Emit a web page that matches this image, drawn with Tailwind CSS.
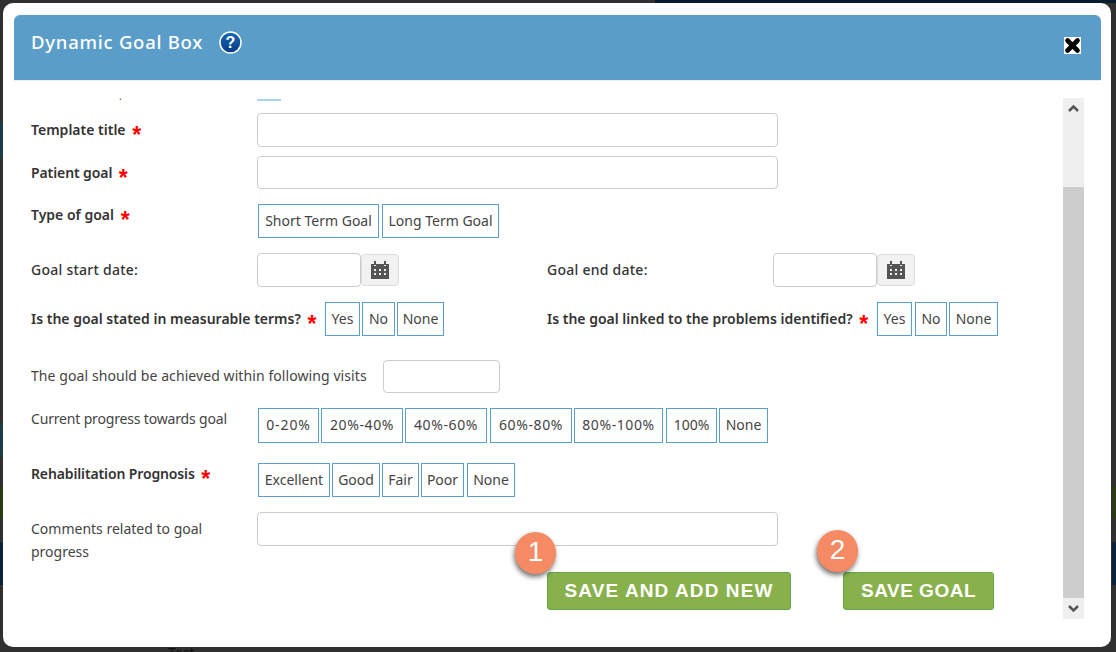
<!DOCTYPE html>
<html><head><meta charset="utf-8"><script src="https://cdn.jsdelivr.net/npm/@tailwindcss/browser@4"></script></head>
<body class="m-0 overflow-hidden">
<div class="relative w-[1116px] h-[652px] overflow-hidden bg-[#303030] pt-[3px] pl-[3px] font-['Noto_Sans','Liberation_Sans',sans-serif] text-[14px] text-[#444]">
<div class="absolute left-[655px] top-0 w-[461px] h-[3px] bg-[#0a1c2c]"></div>
<div class="absolute left-0 top-[122px] w-[3px] h-[36px] bg-[#1f3a48]"></div>
<div class="absolute left-0 top-[423px] w-[3px] h-[34px] bg-[#1f3a48]"></div>
<div class="absolute left-0 top-[486px] w-[3px] h-[32px] bg-[#2a3a16]"></div>
<div class="absolute left-0 top-[542px] w-[3px] h-[43px] bg-[#0b2238]"></div>
<div class="absolute left-[1112px] top-[486px] w-[4px] h-[32px] bg-[#2a3a16]"></div>
<div class="absolute left-[1112px] top-[542px] w-[4px] h-[43px] bg-[#0b2238]"></div>
<span class="absolute left-[168px] top-[642px] text-[14px] text-[#111]">Test</span>
<div class="relative w-[1108px] h-[644px] bg-white rounded-[10px] pt-[12px] pl-[11px] pr-[10px] flex flex-col">
  <div class="h-[65px] bg-[#5b9dc9] rounded-t-[6px] flex items-center pl-[17px] pr-[20px] shrink-0 border-b border-[#e8eef2] box-content -mb-px">
    <span class="text-white text-[18.5px] font-medium leading-none tracking-[0.75px] mb-[10px] whitespace-nowrap">Dynamic Goal Box</span>
    <svg class="ml-[16px] mb-[10px]" width="23" height="23" viewBox="0 0 23 23"><defs><linearGradient id="g" x1="0" y1="0" x2="0" y2="1"><stop offset="0" stop-color="#1a6ab4"/><stop offset="1" stop-color="#063a84"/></linearGradient></defs><circle cx="11.5" cy="11.5" r="10.5" fill="url(#g)" stroke="#fff" stroke-width="1.5"/><text x="11.5" y="17" text-anchor="middle" font-family="Liberation Sans" font-weight="700" font-size="16" fill="#fff">?</text></svg>
    <span class="ml-auto mb-[4px] w-[17px] h-[17px] bg-white flex items-center justify-center"><svg width="17" height="17" viewBox="0 0 17 17"><path d="M3.5 3.5 L13.5 13.5 M13.5 3.5 L3.5 13.5" stroke="#000" stroke-width="4.6" stroke-linecap="round"/></svg></span>
  </div>
  <div class="flex flex-1 min-h-0 pt-[18px]">
    <div class="w-[1049px] pl-[17px] flex flex-col">
      <div class="h-[3px] overflow-hidden flex shrink-0"><span class="w-[226px] pl-[88px] leading-none text-[10px] -mt-[7px]">.</span><span class="w-[24px] h-[2px] mt-[1px] bg-[#a9d3e8]"></span></div>
      <div class="flex items-center h-[34px] mt-[12px]"><label class="w-[226px] font-semibold text-[#333] -mt-[2px] whitespace-nowrap">Template title <span class="text-[#f00] ml-[3px] font-['Liberation_Sans'] font-bold text-[23px] leading-[0] align-[-8px]">*</span></label><div class="w-[521px] h-[34px] border border-[#ccc] rounded-[4px]"></div></div>
      <div class="flex items-center h-[33px] mt-[9px]"><label class="w-[226px] font-semibold text-[#333] tracking-[-0.1px] whitespace-nowrap">Patient goal <span class="text-[#f00] ml-[3px] font-['Liberation_Sans'] font-bold text-[23px] leading-[0] align-[-8px]">*</span></label><div class="w-[521px] h-[33px] border border-[#ccc] rounded-[4px]"></div></div>
      <div class="flex h-[34px] mt-[15px]"><label class="w-[227px] font-semibold text-[#333] whitespace-nowrap">Type of goal <span class="text-[#f00] ml-[3px] font-['Liberation_Sans'] font-bold text-[23px] leading-[0] align-[-8px]">*</span></label>
        <div class="flex gap-[3px]"><b class="font-normal w-[121px] h-[34px] pb-[1px] border border-[#5b9fcf] flex items-center justify-center">Short Term Goal</b><b class="font-normal w-[117px] h-[34px] pb-[1px] border border-[#5b9fcf] flex items-center justify-center">Long Term Goal</b></div></div>
      <div class="flex items-center h-[34px] mt-[15px]">
        <label class="w-[226px] font-medium text-[#333] tracking-[0.25px] pb-[2px]">Goal start date:</label>
        <div class="w-[104px] h-[34px] border border-[#ccc] rounded-[4px]"></div>
        <div class="w-[38px] h-[32px] bg-[#f2f2f2] border border-[#ddd] rounded-[4px] flex items-center justify-center"><svg width="18" height="18" viewBox="0 0 18 18"><path fill="#555" d="M0 3h3v2h2V3h8v2h2V3h3v15H0zM3 0h2v4H3zM13 0h2v4h-2z"/><path fill="#eee" d="M3 8h2v2H3zM8 8h2v2H8zM13 8h2v2h-2zM3 12h2v2H3zM8 12h2v2H8zM13 12h2v2h-2z"/></svg></div>
        <label class="ml-[148px] w-[226px] font-medium text-[#333] tracking-[0.25px] pb-[2px]">Goal end date:</label>
        <div class="w-[104px] h-[34px] border border-[#ccc] rounded-[4px]"></div>
        <div class="w-[38px] h-[32px] bg-[#f2f2f2] border border-[#ddd] rounded-[4px] flex items-center justify-center"><svg width="18" height="18" viewBox="0 0 18 18"><path fill="#555" d="M0 3h3v2h2V3h8v2h2V3h3v15H0zM3 0h2v4H3zM13 0h2v4h-2z"/><path fill="#eee" d="M3 8h2v2H3zM8 8h2v2H8zM13 8h2v2h-2zM3 12h2v2H3zM8 12h2v2H8zM13 12h2v2h-2z"/></svg></div>
      </div>
      <div class="flex items-center h-[34px] mt-[15px]">
        <label class="w-[294px] whitespace-nowrap font-semibold text-[#333] pb-[2px]">Is the goal stated in measurable terms? <span class="text-[#f00] ml-[3px] font-['Liberation_Sans'] font-bold text-[23px] leading-[0] align-[-8px]">*</span></label>
        <div class="flex gap-[2px]"><b class="font-normal w-[35px] h-[34px] pb-[1px] border border-[#5b9fcf] flex items-center justify-center">Yes</b><b class="font-normal w-[33px] h-[34px] pb-[1px] border border-[#5b9fcf] flex items-center justify-center">No</b><b class="font-normal w-[47px] h-[34px] pb-[1px] border border-[#5b9fcf] flex items-center justify-center">None</b></div>
        <label class="ml-[103px] w-[330px] whitespace-nowrap font-semibold text-[#333] pb-[2px]">Is the goal linked to the problems identified? <span class="text-[#f00] ml-[3px] font-['Liberation_Sans'] font-bold text-[23px] leading-[0] align-[-8px]">*</span></label>
        <div class="flex"><b class="font-normal w-[35px] h-[34px] pb-[1px] border border-[#5b9fcf] flex items-center justify-center">Yes</b><b class="font-normal ml-[3px] w-[32px] h-[34px] pb-[1px] border border-[#5b9fcf] flex items-center justify-center">No</b><b class="font-normal ml-[2px] w-[49px] h-[34px] pb-[1px] border border-[#5b9fcf] flex items-center justify-center">None</b></div>
      </div>
      <div class="flex items-center h-[33px] mt-[24px]"><label class="w-[352px] tracking-[0.08px] pb-[3px] whitespace-nowrap">The goal should be achieved within following visits</label><div class="w-[117px] h-[33px] border border-[#ccc] rounded-[4px]"></div></div>
      <div class="flex h-[35px] mt-[15px]"><label class="w-[227px] tracking-[-0.17px] whitespace-nowrap">Current progress towards goal</label>
        <div class="flex">
          <b class="font-normal w-[61px] pb-[2px] tracking-[0.9px] border border-[#5b9fcf] flex items-center justify-center">0-20%</b><b class="font-normal ml-[2px] w-[82px] pb-[2px] tracking-[0.6px] border border-[#5b9fcf] flex items-center justify-center">20%-40%</b><b class="font-normal ml-[2px] w-[82px] pb-[2px] tracking-[0.6px] border border-[#5b9fcf] flex items-center justify-center">40%-60%</b><b class="font-normal ml-[3px] w-[82px] pb-[2px] tracking-[0.6px] border border-[#5b9fcf] flex items-center justify-center">60%-80%</b><b class="font-normal ml-[2px] w-[89px] pb-[2px] tracking-[0.6px] border border-[#5b9fcf] flex items-center justify-center">80%-100%</b><b class="font-normal ml-[3px] w-[51px] pb-[2px] border border-[#5b9fcf] flex items-center justify-center">100%</b><b class="font-normal ml-[2px] w-[49px] pb-[2px] border border-[#5b9fcf] flex items-center justify-center">None</b></div></div>
      <div class="flex h-[34px] mt-[20px]"><label class="w-[227px] font-semibold text-[#333] tracking-[-0.13px] whitespace-nowrap">Rehabilitation Prognosis <span class="text-[#f00] ml-[3px] font-['Liberation_Sans'] font-bold text-[23px] leading-[0] align-[-8px]">*</span></label>
        <div class="flex">
          <b class="font-normal w-[72px] pb-[1px] border border-[#5b9fcf] flex items-center justify-center">Excellent</b><b class="font-normal ml-[2px] w-[48px] pb-[1px] border border-[#5b9fcf] flex items-center justify-center">Good</b><b class="font-normal ml-[2px] w-[37px] pb-[1px] border border-[#5b9fcf] flex items-center justify-center">Fair</b><b class="font-normal ml-[2px] w-[43px] pb-[1px] border border-[#5b9fcf] flex items-center justify-center">Poor</b><b class="font-normal ml-[3px] w-[48px] pb-[1px] border border-[#5b9fcf] flex items-center justify-center">None</b></div></div>
      <div class="flex mt-[15px]"><label class="w-[226px] leading-[23px] pt-[5px] whitespace-nowrap">Comments related to goal<br>progress</label><div class="w-[521px] h-[34px] border border-[#ccc] rounded-[4px]"></div></div>
      <div class="flex mt-[9px] pl-[516px]">
        <button class="w-[244px] h-[38px] pt-[1px] bg-[#88b04b] border border-[#5fa84a] rounded-[3px] text-white font-bold text-[19px] tracking-[1.1px] font-['Liberation_Sans',sans-serif] whitespace-nowrap">SAVE AND ADD NEW</button>
        <button class="ml-[52px] w-[151px] h-[38px] pt-[1px] bg-[#88b04b] border border-[#5fa84a] rounded-[3px] text-white font-bold text-[19px] tracking-[0.5px] font-['Liberation_Sans',sans-serif] whitespace-nowrap">SAVE GOAL</button>
      </div>
    </div>
    <div class="w-[21px] h-[521px] bg-[#efefef] flex flex-col items-center">
      <svg class="mt-[6px]" width="13" height="9" viewBox="0 0 13 9"><path d="M2 7 L6.5 2.5 L11 7" fill="none" stroke="#555" stroke-width="2.5"/></svg>
      <div class="mt-[74px] w-full h-[411px] bg-[#cdcdcd]"></div>
      <svg class="mt-[6px]" width="13" height="9" viewBox="0 0 13 9"><path d="M2 2 L6.5 6.5 L11 2" fill="none" stroke="#555" stroke-width="2.5"/></svg>
    </div>
  </div>
  <div class="absolute left-[512px] top-[529px] w-[41px] h-[42px] rounded-full bg-[#f58a65] text-white text-[28px] leading-[40px] text-center font-['Liberation_Sans',sans-serif] shadow-[-1px_3px_5px_rgba(0,0,0,0.55)]">1</div>
  <div class="absolute left-[814px] top-[527px] w-[41px] h-[42px] rounded-full bg-[#f58a65] text-white text-[28px] leading-[40px] text-center font-['Liberation_Sans',sans-serif] shadow-[-1px_3px_5px_rgba(0,0,0,0.55)]">2</div>
</div>
</div>
</body></html>
